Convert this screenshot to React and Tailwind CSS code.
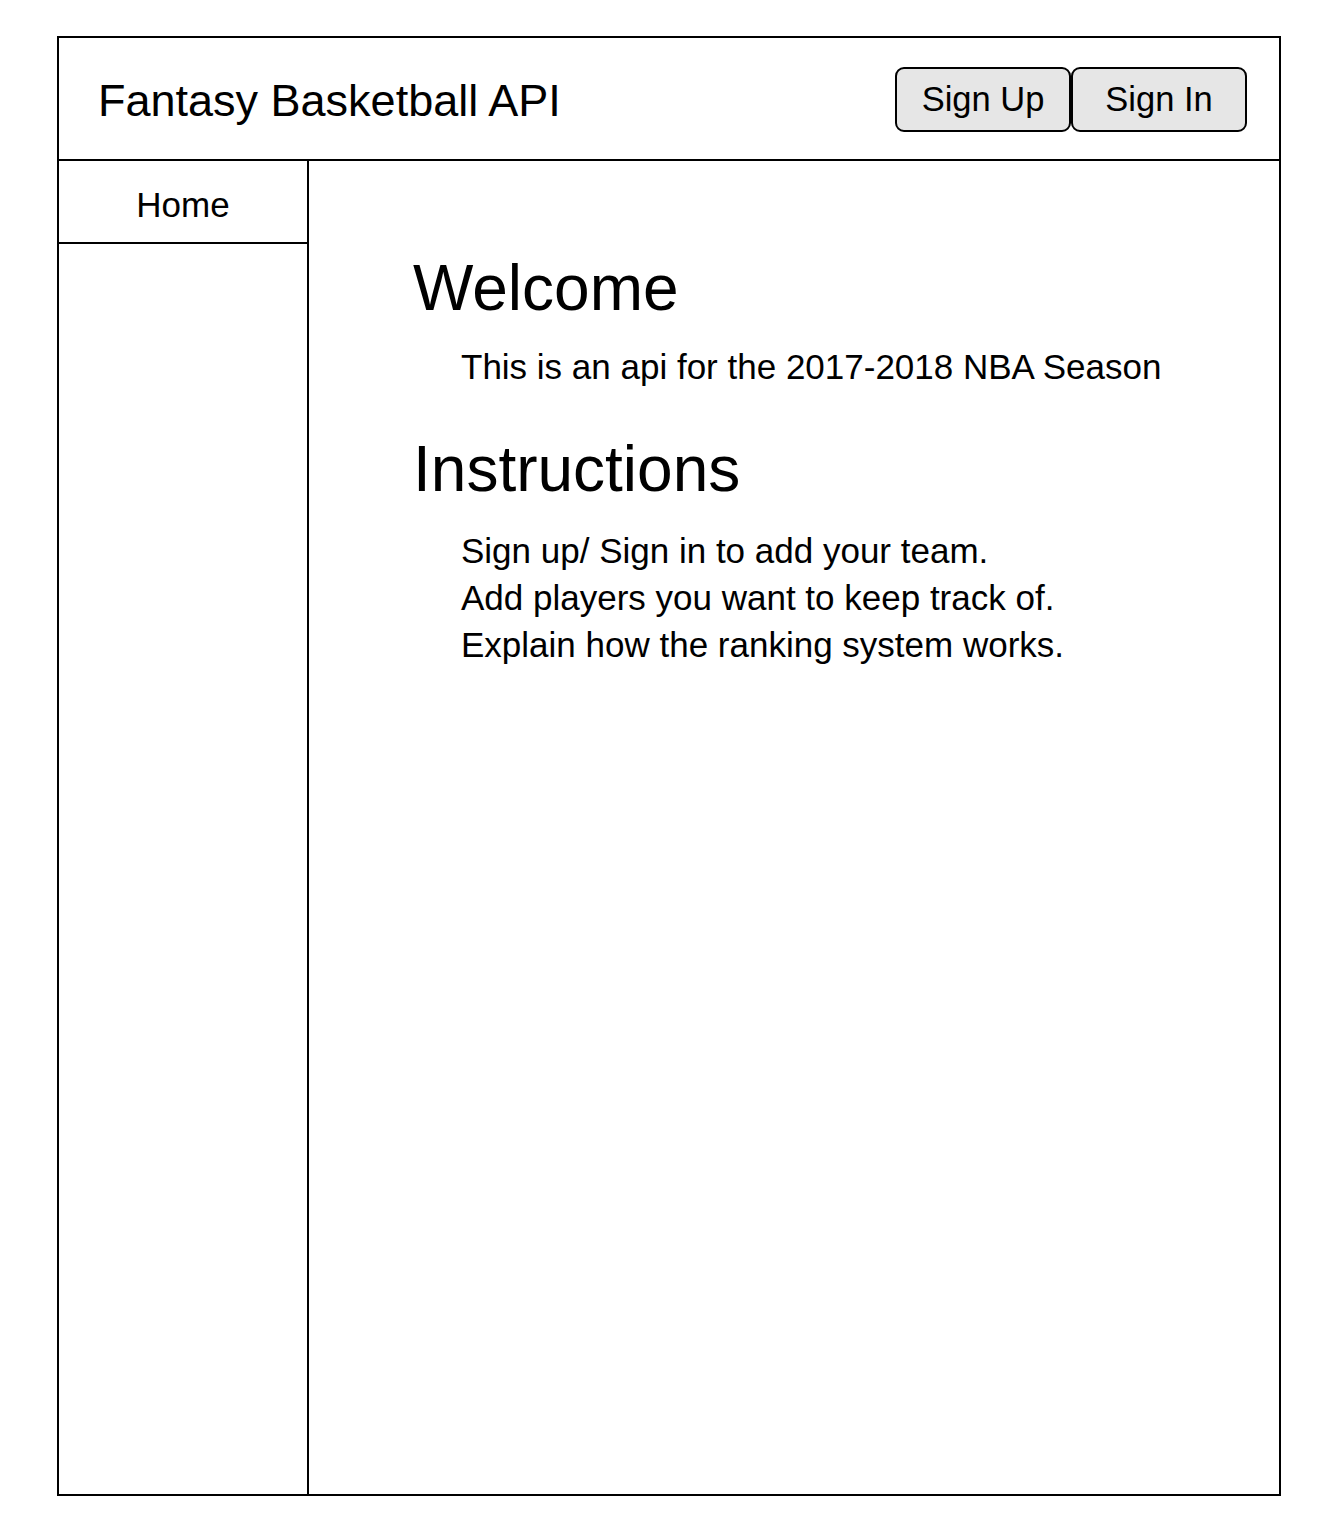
import React from "react";

const font = { fontFamily: '"Liberation Sans", Arial, sans-serif' };

const NavButton = ({ children }) => (
  <button className="w-[176px] h-[65px] bg-[#e6e6e6] border-2 border-black rounded-[9px] text-[34.5px] leading-none text-black flex items-center justify-center">
    {children}
  </button>
);

const App = () => {
  const steps = [
    "Sign up/ Sign in to add your team.",
    "Add players you want to keep track of.",
    "Explain how the ranking system works.",
  ];

  return (
    <div className="min-h-[1519px] bg-white pt-[36px] pl-[57px] font-['Liberation_Sans',Arial,sans-serif] text-black" style={font}>
      <div className="w-[1224px] h-[1460px] border-2 border-black flex flex-col">
        {/* Header */}
        <div className="h-[123px] shrink-0 border-b-2 border-black flex justify-between">
          <h1 className="pl-[39px] pt-[37px] text-[45px] leading-[52px]">Fantasy Basketball API</h1>
          <div className="flex items-start pt-[29px] pr-[32px]">
            <NavButton>Sign Up</NavButton>
            <NavButton>Sign In</NavButton>
          </div>
        </div>

        {/* Body */}
        <div className="flex flex-1 min-h-0">
          <nav className="w-[250px] shrink-0 border-r-2 border-black">
            <div className="h-[83px] border-b-2 border-black text-center pt-[24px] text-[35px] leading-[40px]">
              Home
            </div>
          </nav>

          <main className="flex-1 pl-[104px] pt-[90px]">
            <h2 className="text-[64px] leading-[74px]">Welcome</h2>
            <p className="mt-[18px] pl-[48px] text-[35px] leading-[47px]">
              This is an api for the 2017-2018 NBA Season
            </p>
            <h2 className="mt-[42px] text-[64px] leading-[74px]">Instructions</h2>
            <ul className="mt-[21px] pl-[48px] text-[35px] leading-[47px]">
              {steps.map((s) => (
                <li key={s}>{s}</li>
              ))}
            </ul>
          </main>
        </div>
      </div>
    </div>
  );
};

export default App;
